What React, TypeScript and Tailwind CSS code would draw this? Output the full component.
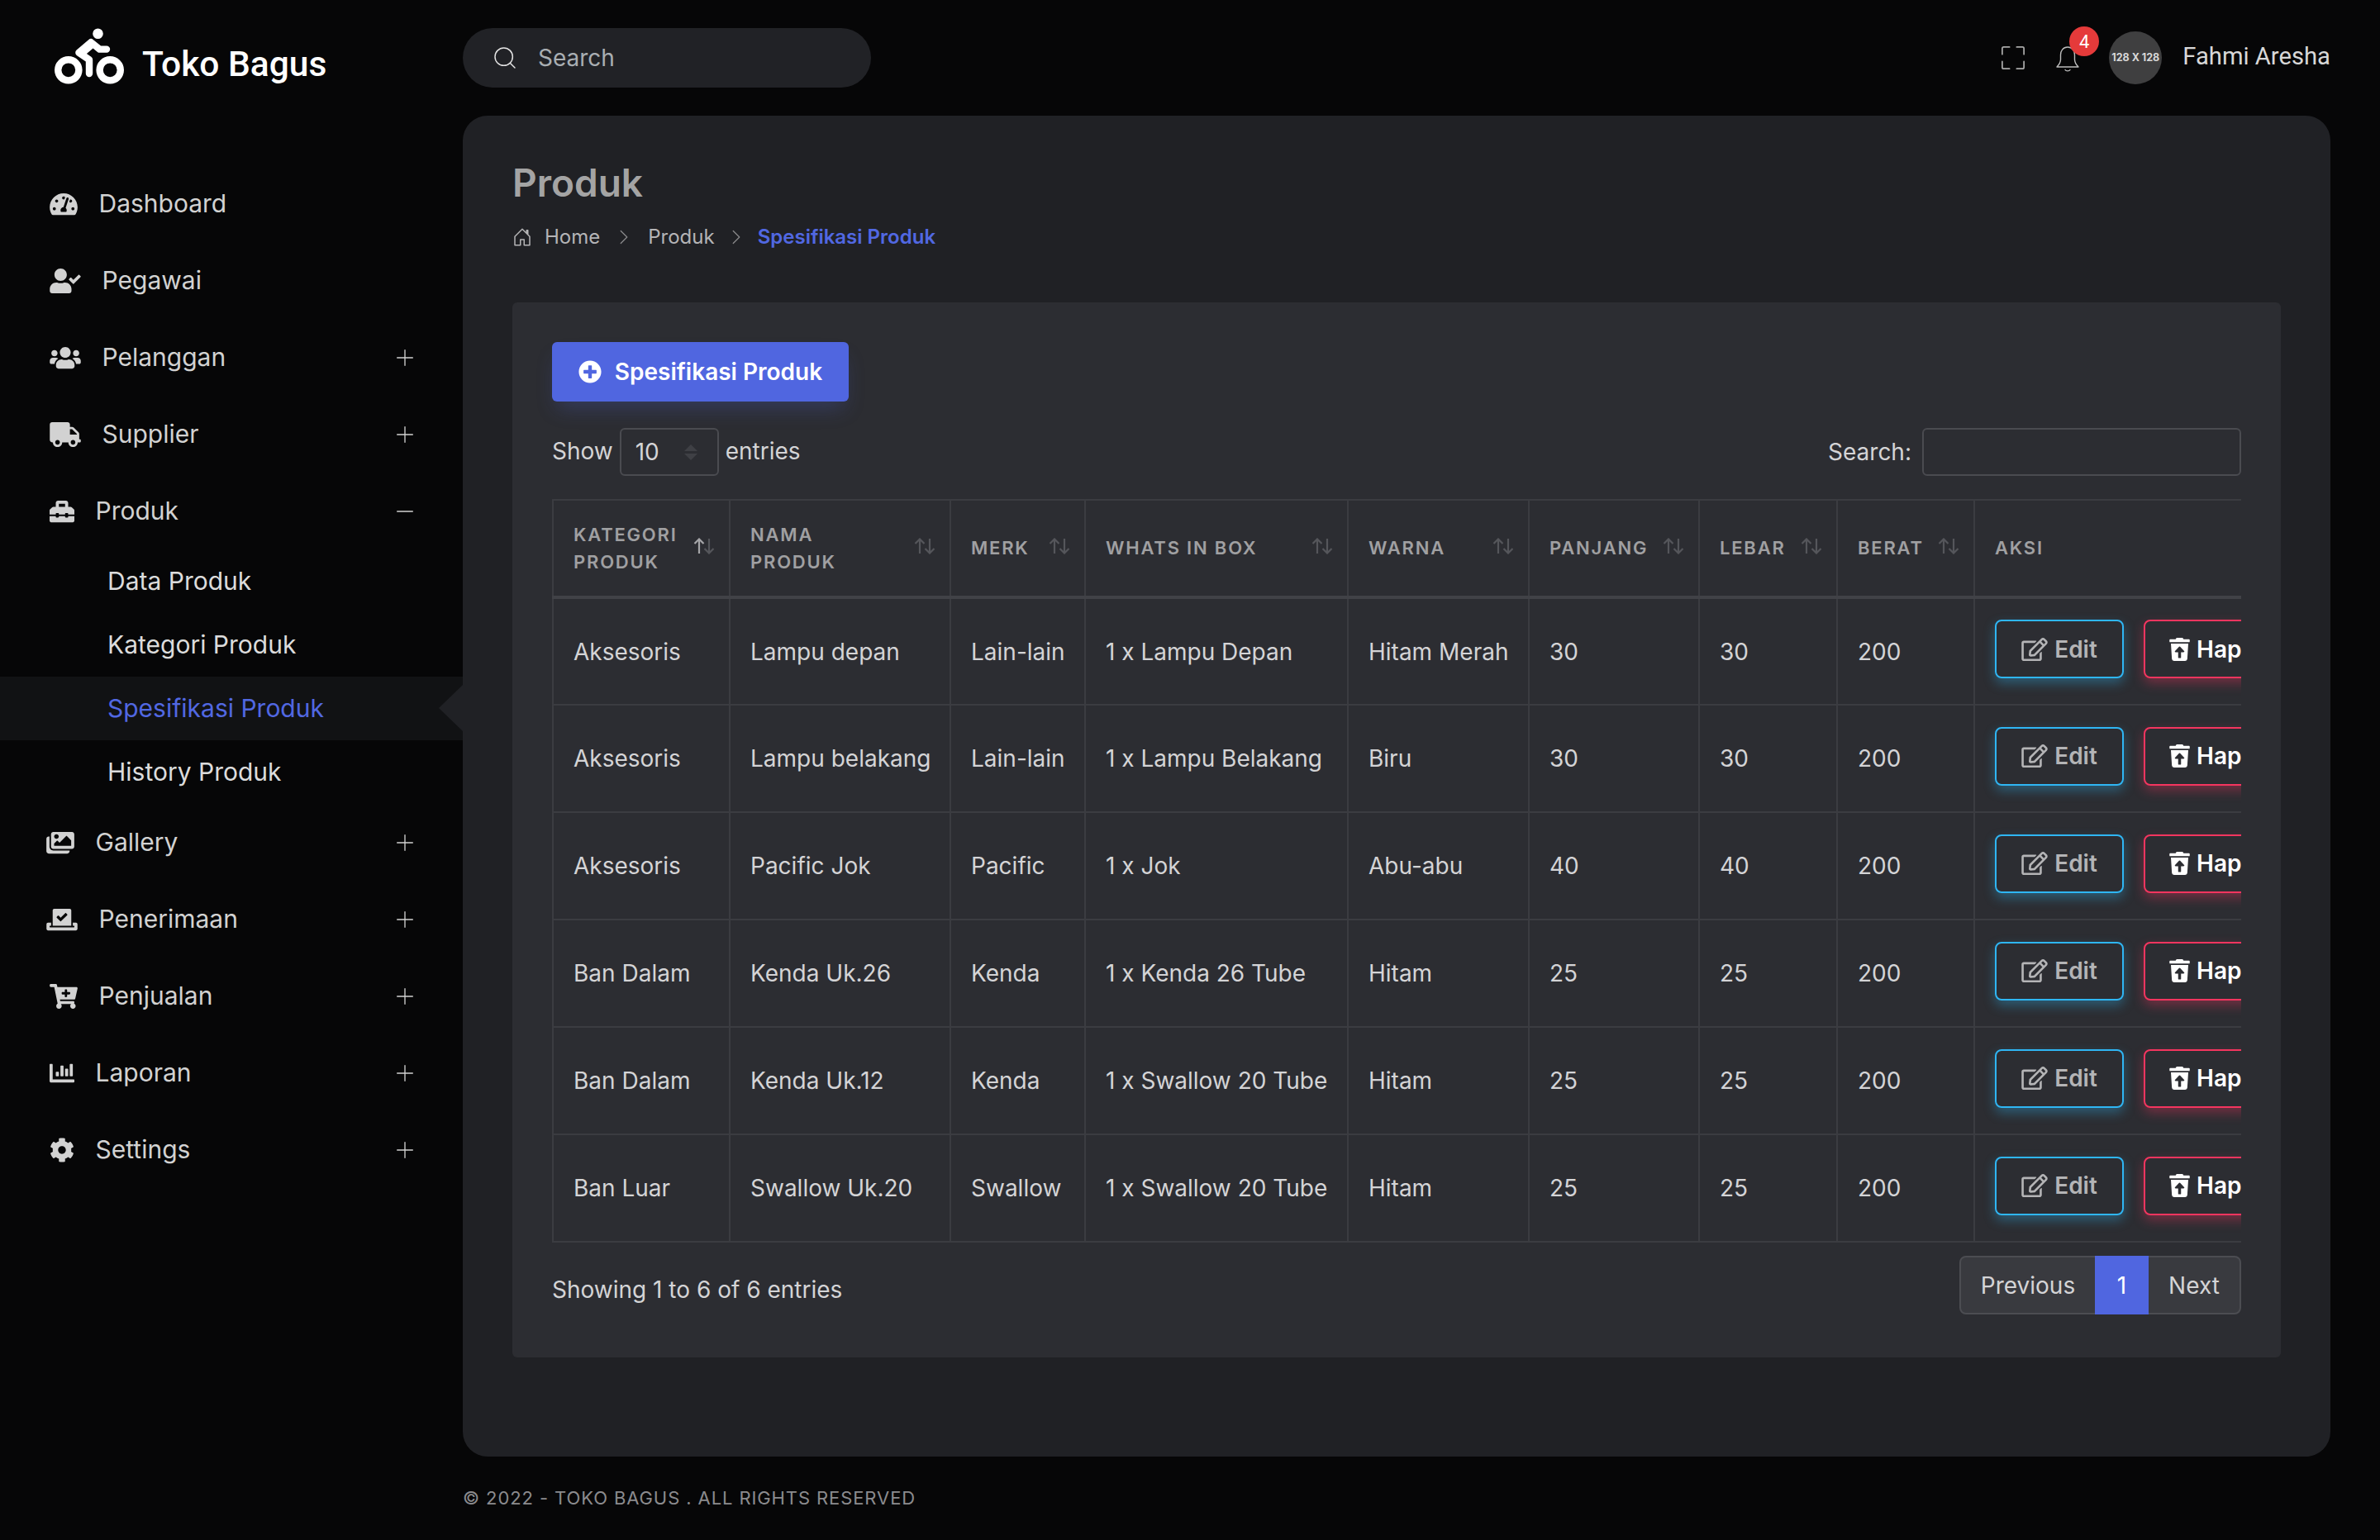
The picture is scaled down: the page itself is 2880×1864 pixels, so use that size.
import { Plus, Minus } from 'lucide-react'
import {
  FaBiking,
  FaTachometerAlt,
  FaUserCheck,
  FaUsers,
  FaTruck,
  FaToolbox,
  FaImages,
  FaVoteYea,
  FaCartPlus,
  FaChartBar,
  FaCog,
  FaPlusCircle,
  FaRegEdit,
  FaTrashRestore,
} from 'react-icons/fa'
import { BsChevronRight, BsFullscreen, BsHouseDoor } from 'react-icons/bs'
import { FiSearch } from 'react-icons/fi'

const menu = [
  { label: 'Dashboard', icon: <FaTachometerAlt className="w-[34px] h-[30px]" /> },
  { label: 'Pegawai', icon: <FaUserCheck className="w-[38px] h-[30px]" /> },
  { label: 'Pelanggan', icon: <FaUsers className="w-[38px] h-[30px]" />, toggle: true },
  { label: 'Supplier', icon: <FaTruck className="w-[38px] h-[30px]" />, toggle: true },
]

const menuBottom = [
  { label: 'Gallery', icon: <FaImages className="w-[34px] h-[30px] -ml-1" /> },
  { label: 'Penerimaan', icon: <FaVoteYea className="w-[38px] h-[30px] -ml-1" /> },
  { label: 'Penjualan', icon: <FaCartPlus className="w-[34px] h-[30px]" /> },
  { label: 'Laporan', icon: <FaChartBar className="w-[30px] h-[30px]" /> },
  { label: 'Settings', icon: <FaCog className="w-[30px] h-[30px]" /> },
]

const rows = [
  ['Aksesoris', 'Lampu depan', 'Lain-lain', '1 x Lampu Depan', 'Hitam Merah', '30', '30', '200'],
  ['Aksesoris', 'Lampu belakang', 'Lain-lain', '1 x Lampu Belakang', 'Biru', '30', '30', '200'],
  ['Aksesoris', 'Pacific Jok', 'Pacific', '1 x Jok', 'Abu-abu', '40', '40', '200'],
  ['Ban Dalam', 'Kenda Uk.26', 'Kenda', '1 x Kenda 26 Tube', 'Hitam', '25', '25', '200'],
  ['Ban Dalam', 'Kenda Uk.12', 'Kenda', '1 x Swallow 20 Tube', 'Hitam', '25', '25', '200'],
  ['Ban Luar', 'Swallow Uk.20', 'Swallow', '1 x Swallow 20 Tube', 'Hitam', '25', '25', '200'],
]

const columns = [
  { label: ['KATEGORI', 'PRODUK'], width: 'w-[214px] min-w-[214px]', active: true },
  { label: ['NAMA', 'PRODUK'], width: 'w-[267px] min-w-[267px]' },
  { label: ['MERK'], width: 'w-[163px] min-w-[163px]' },
  { label: ['WHATS IN BOX'], width: 'w-[318px] min-w-[318px]' },
  { label: ['WARNA'], width: 'w-[219px] min-w-[219px]' },
  { label: ['PANJANG'], width: 'w-[206px] min-w-[206px]' },
  { label: ['LEBAR'], width: 'w-[167px] min-w-[167px]' },
  { label: ['BERAT'], width: 'w-[166px] min-w-[166px]' },
]

function SortIcon({ active }: { active?: boolean }) {
  return (
    <svg viewBox="0 0 26 20" className="absolute right-[17px] top-[45px] w-[26px] h-[20px]" fill="none" strokeWidth="2.2">
      <path d="M7 19V1.5M1.5 7L7 1.5 12.5 7" stroke={active ? '#a5a5a8' : '#55565b'} />
      <path d="M19 1v17.5M13.5 13l5.5 5.5 5.5-5.5" stroke="#55565b" />
    </svg>
  )
}

function BellIcon() {
  return (
    <svg viewBox="0 0 28 31" className="w-[28px] h-[31px]" fill="none" stroke="#bcbcbc" strokeWidth="1.4">
      <path d="M14 1C8.5 1 5.5 5.5 5.5 10.5V16c0 3.500-1.500 6-4.500 9h26c-3-3-4.500-5.500-4.500-9v-5.500C22.500 5.500 19.500 1 14 1Z" strokeLinejoin="round" />
      <path d="M11 28.500c1 1.800 5 1.800 6 0" strokeLinecap="round" />
    </svg>
  )
}

function MenuRow({ label, icon, toggle }: { label: string; icon: React.ReactNode; toggle?: React.ReactNode }) {
  return (
    <div className="h-[93px] flex items-center pl-[60px] pr-[54px] text-[#d2d2d2]">
      <span className="flex items-center gap-[25.5px]">
        {icon}
        <span>{label}</span>
      </span>
      {toggle && <span className="ml-auto text-[#d2d2d2]">{toggle}</span>}
    </div>
  )
}

export default function App() {
  return (
    <div className="flex min-h-[1864px] bg-[#060607] font-['Inter',sans-serif] text-[30px] text-[#d4d4d6]">
      <aside className="w-[560px] shrink-0">
        <div className="h-[140px] pl-[66px] flex items-center gap-[22px] pb-[4px]">
          <FaBiking className="w-[84px] h-[68px] text-white" />
          <span className="mt-[20px] font-['Roboto',sans-serif] font-medium text-[42.5px] text-white">Toko Bagus</span>
        </div>
        <nav className="pt-[60px]">
          {menu.map((m) => (
            <MenuRow key={m.label} label={m.label} icon={m.icon} toggle={m.toggle ? <Plus strokeWidth={1} className="w-[32px] h-[32px]" /> : null} />
          ))}
          <MenuRow
            label="Produk"
            icon={<FaToolbox className="w-[30px] h-[30px]" />}
            toggle={<Minus strokeWidth={1} className="w-[32px] h-[32px]" />}
          />
          <div>
            <div className="h-[77px] flex items-center pl-[130px] text-[#dcdcdc]">Data Produk</div>
            <div className="h-[77px] flex items-center pl-[130px] text-[#dcdcdc]">Kategori Produk</div>
            <div className="relative h-[77px] flex items-center pl-[130px] bg-[#111214] text-[#5168e2]">
              Spesifikasi Produk
              <span className="absolute right-0 top-[10px] border-y-[28px] border-y-transparent border-r-[29px] border-r-[#202125]" />
            </div>
            <div className="h-[77px] flex items-center pl-[130px] text-[#dcdcdc]">History Produk</div>
          </div>
          {menuBottom.map((m) => (
            <MenuRow key={m.label} label={m.label} icon={m.icon} toggle={<Plus strokeWidth={1} className="w-[32px] h-[32px]" />} />
          ))}
        </nav>
      </aside>

      <div className="flex-1 min-w-0 pr-[60px]">
        <header className="h-[140px] flex items-center justify-between">
          <div className="w-[494px] h-[72px] rounded-full bg-[#212226] flex items-center gap-[24px] px-[35px] text-[28px] text-[#a9aeb2]">
            <FiSearch className="w-[32px] h-[32px] text-[#e4e4e4]" strokeWidth={1.1} />
            <span>Search</span>
          </div>
          <div className="flex items-center">
            <BsFullscreen className="w-[28px] h-[28px] text-[#a8a8a8] mr-[38px]" />
            <div className="relative mr-[36px] mt-[3px] flex">
              <BellIcon />
              <span className="absolute -top-[24px] left-[16px] w-[36px] h-[36px] rounded-full bg-[#e53a3a] text-white text-[22px] font-['Roboto',sans-serif] flex items-center justify-center">
                4
              </span>
            </div>
            <div className="w-[64px] h-[64px] rounded-full bg-[#3f3f40] flex items-center justify-center text-[12.5px] font-bold text-[#d8d8d8] mr-[25px]">
              128 X 128
            </div>
            <span className="-mt-[3px] font-['Roboto',sans-serif] text-[29.2px] text-[#d8d8d8]">Fahmi Aresha</span>
          </div>
        </header>

        <main className="h-[1623px] rounded-[30px] bg-[#202125] px-[60px] pt-[52px]">
          <h1 className="text-[46px] leading-[58px] font-semibold text-[#a4a4a4]">Produk</h1>
          <div className="mt-[21px] h-[32px] flex items-center text-[24px] text-[#b4b4b6]">
            <BsHouseDoor className="w-[24px] h-[24px] mr-[15px]" />
            <span>Home</span>
            <BsChevronRight className="w-[20px] h-[20px] mx-[19px] text-[#8a8a8c]" />
            <span>Produk</span>
            <BsChevronRight className="w-[20px] h-[20px] mx-[16px] text-[#8a8a8c]" />
            <span className="font-semibold text-[#5168e2]">Spesifikasi Produk</span>
          </div>

          <section className="mt-[63px] h-[1277px] rounded-[6px] bg-[#2c2d32] px-[48px] pt-[48px] text-[28px]">
            <button className="h-[72px] w-[359px] rounded-[6px] bg-[#5066e0] shadow-[0_14px_24px_-6px_rgba(80,102,224,0.25)] text-white font-semibold flex items-center justify-center gap-[16px]">
              <FaPlusCircle className="w-[28px] h-[28px]" />
              Spesifikasi Produk
            </button>

            <div className="mt-[32px] h-[58px] flex items-center justify-between">
              <div className="flex items-center gap-[8px]">
                <span className="-mt-[2px]">Show</span>
                <div className="w-[120px] h-[58px] rounded-[6px] border-2 border-[#4a4b50] pl-[17px] flex items-center relative">
                  10
                  <span className="absolute right-[24px] top-[18px] flex flex-col gap-[3px]">
                    <span className="border-x-[8px] border-x-transparent border-b-[8px] border-b-[#3f4045]" />
                    <span className="border-x-[8px] border-x-transparent border-t-[8px] border-t-[#3f4045]" />
                  </span>
                </div>
                <span className="-mt-[2px]">entries</span>
              </div>
              <div className="flex items-center gap-[13px]">
                <span>Search:</span>
                <div className="w-[386px] h-[58px] rounded-[6px] border-2 border-[#4a4b50]" />
              </div>
            </div>

            <div className="mt-[28px] w-[2044px] overflow-hidden">
              <table className="border-collapse table-fixed w-[2080px]">
                <thead>
                  <tr className="h-[118px] border-t-[2px] border-t-[#3b3c41] border-b-[4px] border-b-[#414247]">
                    {columns.map((c) => (
                      <th key={c.label.join()} className={`${c.width} relative border-x-[2px] border-x-[#3b3c41] px-[24px] text-left text-[22px] leading-[33px] font-semibold tracking-[1.8px] text-[#a0a0a2]`}>
                        {c.label.map((l) => (
                          <div key={l}>{l}</div>
                        ))}
                        <SortIcon active={c.active} />
                      </th>
                    ))}
                    <th className="px-[24px] text-left text-[22px] font-semibold tracking-[1.8px] text-[#a0a0a2]">AKSI</th>
                  </tr>
                </thead>
                <tbody>
                  {rows.map((r, i) => (
                    <tr key={i} className="h-[130px] border-b-[2px] border-b-[#3b3c41]">
                      {r.map((cell, j) => (
                        <td key={j} className="border-x-[2px] border-x-[#3b3c41] px-[24px] whitespace-nowrap">
                          {cell}
                        </td>
                      ))}
                      <td className="pl-[24px] whitespace-nowrap">
                        <div className="flex gap-[24px] -mt-[6px]">
                          <button className="w-[156px] h-[71px] shrink-0 rounded-[8px] border-2 border-[#2fb6f4] shadow-[0_6px_14px_0_rgba(47,182,244,0.35)] flex items-center justify-center gap-[8px] font-semibold text-[#b4b4b6]">
                            <FaRegEdit className="w-[32px] h-[28px]" />
                            Edit
                          </button>
                          <button className="w-[182px] h-[71px] shrink-0 rounded-[8px] border-2 border-[#f5355f] shadow-[0_6px_14px_0_rgba(245,53,95,0.35)] flex items-center justify-center gap-[8px] font-semibold text-white">
                            <FaTrashRestore className="w-[25px] h-[28px]" />
                            Hapus
                          </button>
                        </div>
                      </td>
                    </tr>
                  ))}
                </tbody>
              </table>
            </div>

            <div className="mt-[16px] flex items-center justify-between">
              <span className="mt-[10px]">Showing 1 to 6 of 6 entries</span>
              <div className="h-[71px] rounded-[8px] border-2 border-[#4c4d52] bg-[#393a3f] flex items-center">
                <span className="w-[162px] text-center">Previous</span>
                <span className="h-[71px] w-[65px] -my-[2px] bg-[#5066e0] text-white flex items-center justify-center">1</span>
                <span className="w-[110px] text-center">Next</span>
              </div>
            </div>
          </section>
        </main>

        <footer className="pt-[34px] text-[22px] tracking-[0.9px] text-[#8b8b8e]">© 2022 - TOKO BAGUS . ALL RIGHTS RESERVED</footer>
      </div>
    </div>
  )
}
